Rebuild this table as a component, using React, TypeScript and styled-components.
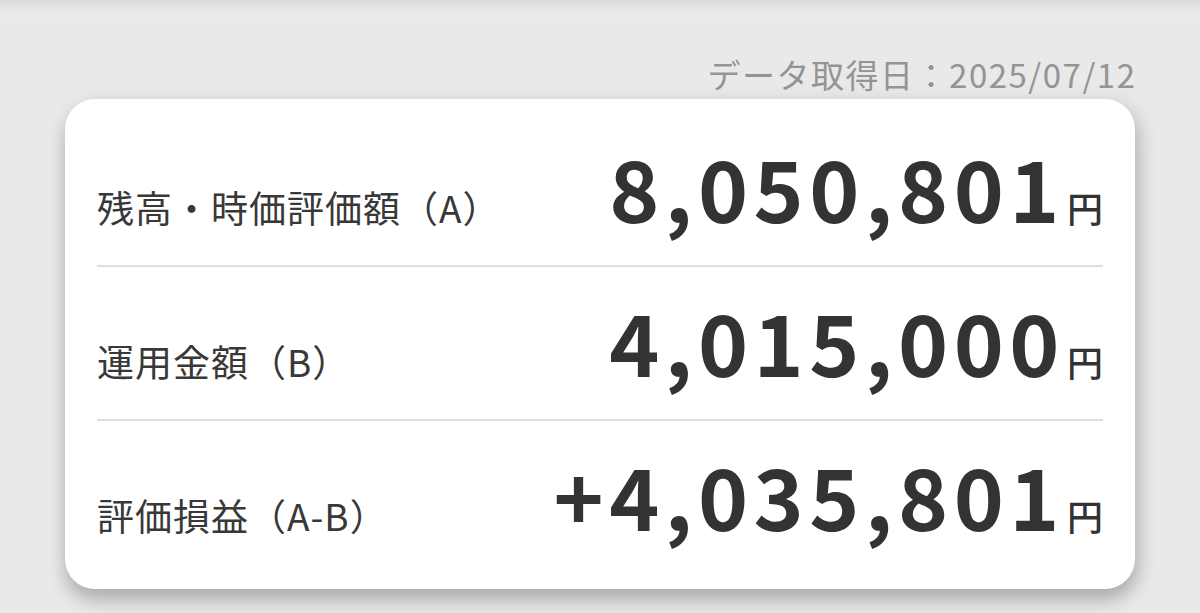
import React from "react";
import styled, { createGlobalStyle } from "styled-components";

const GlobalStyle = createGlobalStyle`
  html, body {
    margin: 0;
    padding: 0;
    background: #e9e9e9;
  }
  body {
    font-family: "Noto Sans CJK JP", "Noto Sans", sans-serif;
    color: #333;
  }
`;

const Page = styled.div`
  min-height: 613px;
  box-sizing: border-box;
  padding: 0 65px;
  background: linear-gradient(
    to bottom,
    #dcdcdc 0px,
    #e4e4e4 8px,
    #ebebeb 16px,
    #e9e9e9 24px,
    #e9e9e9 100%
  );
  overflow: hidden;
`;

const DateLine = styled.div`
  padding-top: 58px;
  text-align: right;
  font-size: 33px;
  line-height: 1;
  letter-spacing: 1.5px;
  color: #949494;
  margin-right: -1.5px;
`;

const Card = styled.section`
  margin-top: 8px;
  background: #fff;
  border-radius: 30px;
  padding: 14px 32px 15px;
  box-shadow: 0 12px 18px rgba(0, 0, 0, 0.2), 6px 4px 22px rgba(0, 0, 0, 0.1);
`;

const Row = styled.div<{ $last?: boolean }>`
  display: flex;
  align-items: baseline;
  justify-content: space-between;
  padding: 30px 0 ${(p) => (p.$last ? 38 : 37)}px;
  border-bottom: ${(p) => (p.$last ? "none" : "2px solid #dedede")};
`;

const Label = styled.span`
  font-size: 37px;
  line-height: 1;
  letter-spacing: 1px;
  color: #383838;
`;

const Amount = styled.span`
  display: flex;
  align-items: baseline;
`;

const Digits = styled.span`
  font-size: 85px;
  font-weight: 700;
  line-height: 1;
  letter-spacing: 5.5px;
  color: #333;
`;

const Yen = styled.span`
  font-size: 36px;
  font-weight: 500;
  line-height: 1;
  color: #333;
  margin-left: 2px;
`;

const rows = [
  { label: "残高・時価評価額（A）", value: "8,050,801" },
  { label: "運用金額（B）", value: "4,015,000" },
  { label: "評価損益（A-B）", value: "+4,035,801" },
];

export default function App() {
  return (
    <>
      <GlobalStyle />
      <Page>
        <DateLine>データ取得日：2025/07/12</DateLine>
        <Card>
          {rows.map((r, i) => (
            <Row key={r.label} $last={i === rows.length - 1}>
              <Label>{r.label}</Label>
              <Amount>
                <Digits>{r.value}</Digits>
                <Yen>円</Yen>
              </Amount>
            </Row>
          ))}
        </Card>
      </Page>
    </>
  );
}
